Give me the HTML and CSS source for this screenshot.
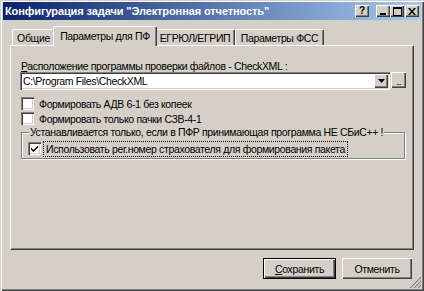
FILE: index.html
```html
<!DOCTYPE html>
<html lang="ru">
<head>
    <meta charset="UTF-8">
    <title>Конфигурация задачи</title>
    <link rel="stylesheet" href="styles.css">
</head>
<body>

    <div class="window">
        <div class="titlebar">
            <span class="title">Конфигурация задачи "Электронная отчетность"</span>
            <div class="title-buttons">
                <span class="tbtn help">?</span>
                <span class="tbtn min"><svg width="8" height="8" viewBox="0 0 8 8"><rect x="1" y="6" width="6" height="2" fill="#000"/></svg></span>
                <span class="tbtn max"><svg width="9" height="9" viewBox="0 0 9 9"><rect x="0.5" y="0.5" width="8" height="8" fill="none" stroke="#000"/><rect x="0" y="0" width="9" height="2" fill="#000"/></svg></span>
                <span class="tbtn close"><svg width="8" height="7" viewBox="0 0 8 7"><path d="M0 0h2l2 2.5 2-2.5h2l-3 3.5 3 3.5h-2l-2-2.5-2 2.5h-2l3-3.5z" fill="#000"/></svg></span>
            </div>
        </div>

        <div class="content">
            <div class="tabs">
                <div class="tab tab-common">Общие</div>
                <div class="tab tab-active">Параметры для ПФ</div>
                <div class="tab tab-egr">ЕГРЮЛ/ЕГРИП</div>
                <div class="tab tab-fss">Параметры ФСС</div>
            </div>

            <div class="panel">
                <div class="label"><u>Р</u>асположение программы проверки файлов - CheckXML :</div>
                <div class="combo-row">
                    <div class="combo">
                        <span class="combo-text">C:\Program Files\CheckXML</span>
                        <span class="combo-arrow"><svg width="7" height="4" viewBox="0 0 7 4"><path d="M0 0h7l-3.5 4z" fill="#000"/></svg></span>
                    </div>
                    <span class="dots-btn">...</span>
                </div>

                <div class="check-row">
                    <span class="check"></span>
                    <span class="check-text">Формировать АДВ 6-1 без копеек</span>
                </div>
                <div class="check-row">
                    <span class="check"></span>
                    <span class="check-text">Формировать только пачки СЗВ-4-1</span>
                </div>

                <fieldset class="group">
                    <legend>Устанавливается только, если в ПФР принимающая программа НЕ СБиС++ !</legend>
                    <div class="check-row inner">
                        <span class="check"><svg width="9" height="9" viewBox="0 0 9 9"><path d="M1 3.5l2.5 2.5 4.5-4.5v2l-4.5 4.5-2.5-2.5z" fill="#000"/></svg></span>
                        <span class="check-text focused">Использовать рег.номер страхователя для формирования пакета</span>
                    </div>
                </fieldset>
            </div>

            <div class="footer">
                <button class="btn btn-default"><u>С</u>охранить</button>
                <button class="btn">Отменить</button>
            </div>
        </div>

        <svg class="grip" width="12" height="12" viewBox="0 0 12 12">
            <path d="M11 1L1 11M11 5L5 11M11 9L9 11" stroke="#fff" stroke-width="1"/>
            <path d="M12 1L1 12M12 5L5 12M12 9L9 12" stroke="#808080" stroke-width="1.2"/>
        </svg>
    </div>

</body>
</html>
```

FILE: styles.css
```css
body {
    margin: 0;
    background-color: #d4d0c8;
    font-family: "Liberation Sans", Arial, sans-serif;
    font-size: 10.5px;
    letter-spacing: -0.35px;
    color: #000;
}
.window {
    position: relative;
    width: 424px;
    height: 291px;
    box-sizing: border-box;
    background-color: #d4d0c8;
    box-shadow: inset 1px 1px #d4d0c8, inset 2px 2px #fff, inset -1px -1px #404040, inset -2px -2px #808080;
    overflow: hidden;
}
.titlebar {
    margin: 2px 3px 0 3px;
    height: 18px;
    display: flex;
    align-items: center;
    justify-content: space-between;
    background: linear-gradient(to right, #0a246a, #a6caf0);
    padding-left: 2px;
}
.title {
    color: #fff;
    font-weight: bold;
    font-size: 11px;
    letter-spacing: -0.1px;
}
.title-buttons {
    display: flex;
    align-items: center;
    padding-right: 2px;
    letter-spacing: 0;
}
.tbtn {
    width: 14px;
    height: 12px;
    display: flex;
    align-items: center;
    justify-content: center;
    background: #d4d0c8;
    box-shadow: inset 1px 1px #fff, inset -1px -1px #404040, inset -2px -2px #808080;
    font-weight: bold;
    font-size: 10px;
    line-height: 12px;
}
.help {
    margin-right: 7px;
}
.close {
    margin-left: 1px;
}
.content {
    padding: 6px 10px 0 10px;
}
.tabs {
    display: flex;
    align-items: flex-end;
    height: 20px;
    margin-bottom: -1px;
    padding-left: 2px;
}
.tab {
    height: 16px;
    line-height: 16px;
    margin-bottom: 1px;
    box-sizing: border-box;
    text-align: center;
    background: #d4d0c8;
    border-top: 1px solid #fff;
    border-left: 1px solid #fff;
    border-right: 1px solid #404040;
    border-radius: 2px 2px 0 0;
    box-shadow: inset -1px 0 #808080;
    white-space: nowrap;
}
.tab-common {
    width: 43px;
}
.tab-active {
    position: relative;
    z-index: 1;
    width: 104px;
    height: 20px;
    line-height: 18px;
    margin: 0 -2px 0 -2px;
    padding-bottom: 2px;
}
.tab-egr {
    width: 80px;
}
.tab-fss {
    width: 89px;
}
.panel {
    height: 205px;
    box-sizing: border-box;
    border-top: 1px solid #fff;
    border-left: 1px solid #fff;
    border-right: 1px solid #404040;
    border-bottom: 1px solid #404040;
    box-shadow: inset -1px -1px #808080;
    padding: 14px 7px 0 10px;
}
.label {
    height: 12px;
    line-height: 12px;
}
.combo-row {
    display: flex;
    margin-left: -1px;
    width: 386px;
    height: 18px;
}
.combo {
    flex: 1;
    display: flex;
    align-items: center;
    background: #fff;
    box-shadow: inset 1px 1px #808080, inset 2px 2px #404040, inset -1px -1px #fff, inset -2px -2px #d4d0c8;
    padding: 2px;
    box-sizing: border-box;
}
.combo-text {
    flex: 1;
    padding-left: 1px;
}
.combo-arrow {
    width: 14px;
    height: 14px;
    display: flex;
    align-items: center;
    justify-content: center;
    background: #d4d0c8;
    box-shadow: inset 1px 1px #fff, inset -1px -1px #404040, inset -2px -2px #808080;
}
.dots-btn {
    width: 15px;
    height: 16px;
    margin-left: 1px;
    display: flex;
    align-items: flex-end;
    justify-content: center;
    line-height: 12px;
    background: #d4d0c8;
    box-shadow: inset 1px 1px #fff, inset -1px -1px #404040, inset -2px -2px #808080;
    font-size: 9px;
    letter-spacing: -1px;
}
.check-row {
    display: flex;
    align-items: center;
    height: 15px;
}
.combo-row + .check-row {
    margin-top: 6px;
}
.check {
    width: 13px;
    height: 13px;
    box-sizing: border-box;
    display: flex;
    align-items: center;
    justify-content: center;
    background: #fff;
    box-shadow: inset 1px 1px #808080, inset 2px 2px #404040, inset -1px -1px #fff, inset -2px -2px #d4d0c8;
}
.check-text {
    margin-left: 5px;
    white-space: nowrap;
}
.group {
    margin: 0;
    width: 384px;
    box-sizing: border-box;
    padding: 2px 6px 2px 6px;
    border: 1px solid #808080;
    box-shadow: 1px 1px #fff, inset 1px 1px #fff;
}
.group legend {
    padding: 0 1px;
    margin-left: 1px;
    line-height: 13px;
    background: #d4d0c8;
    white-space: nowrap;
}
.focused {
    margin-left: 3px;
    padding: 1px 2px;
    outline: 1px dotted #000;
}
.footer {
    display: flex;
    justify-content: flex-end;
    gap: 6px;
    padding: 8px 2px 0 0;
}
.btn {
    height: 21px;
    font-family: "Liberation Sans", Arial, sans-serif;
    font-size: 10.5px;
    letter-spacing: -0.35px;
    background: #d4d0c8;
    border: none;
    padding: 0;
    box-shadow: inset 1px 1px #fff, inset -1px -1px #404040, inset -2px -2px #808080;
    color: #000;
    width: 70px;
}
.btn-default {
    width: 73px;
    border: 1px solid #000;
}
.grip {
    position: absolute;
    right: 3px;
    bottom: 3px;
}
```
